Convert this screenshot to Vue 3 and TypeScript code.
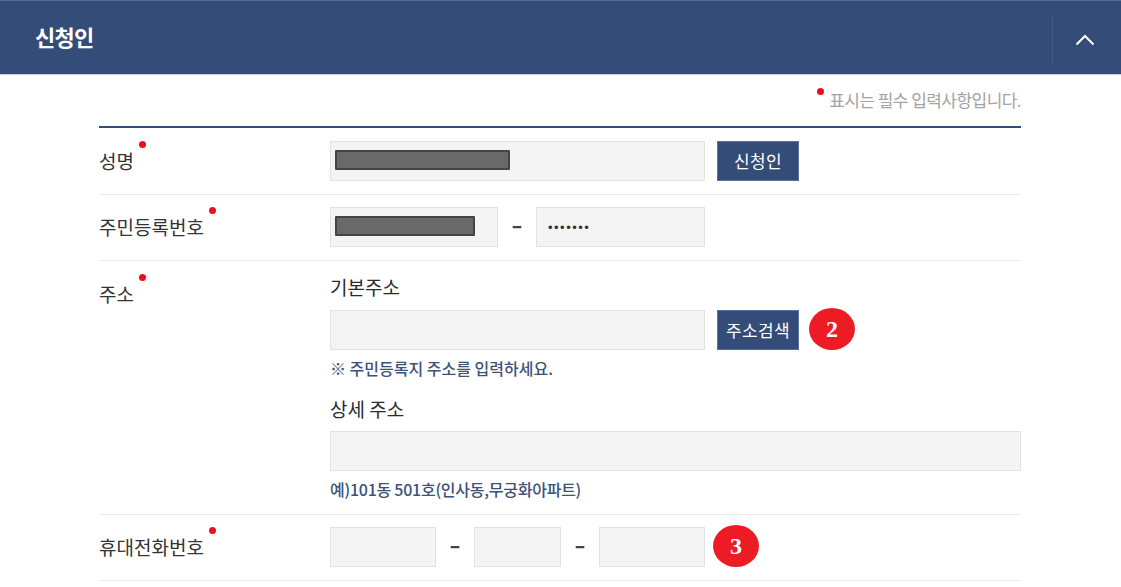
<script setup lang="ts">
interface Part { width: number; masked?: number; secret?: string }
const residentParts: Part[] = [{ width: 168, masked: 140 }, { width: 169, secret: '1234567' }]
const phoneParts: Part[] = [{ width: 106 }, { width: 87 }, { width: 106 }]
</script>

<template>
  <section class="panel">
    <header class="head">
      <h2 class="title">신청인</h2>
      <button class="toggle" type="button" aria-label="접기">
        <svg width="20" height="12" viewBox="0 0 20 12" fill="none">
          <path d="M1.5 10.5 10 2l8.5 8.5" stroke="#fff" stroke-width="2" />
        </svg>
      </button>
    </header>

    <div class="body">
      <p class="required"><i class="dot"></i>표시는 필수 입력사항입니다.</p>

      <div class="table">
        <div class="row">
          <div class="label"><span class="req">성명</span></div>
          <div class="line">
            <div class="field wide"><input class="input" readonly /><span class="mask name"></span></div>
            <button class="btn" type="button">신청인</button>
          </div>
        </div>

        <div class="row">
          <div class="label"><span class="req">주민등록번호</span></div>
          <div class="line joined">
            <template v-for="(p, i) in residentParts" :key="i">
              <span v-if="i" class="dash">–</span>
              <div class="field" :style="{ width: p.width + 'px' }">
                <input class="input" :class="{ secret: p.secret }" :type="p.secret ? 'password' : 'text'" :value="p.secret" readonly />
                <span v-if="p.masked" class="mask" :style="{ width: p.masked + 'px' }"></span>
              </div>
            </template>
          </div>
        </div>

        <div class="row addr">
          <div class="label"><span class="req">주소</span></div>
          <div class="stack">
            <div class="sub first">기본주소</div>
            <div class="line">
              <div class="field wide"><input class="input" readonly /></div>
              <button class="btn" type="button">주소검색</button>
              <span class="badge">2</span>
            </div>
            <p class="hint top-hint">※ 주민등록지 주소를 입력하세요.</p>
            <div class="sub second">상세 주소</div>
            <div class="field full"><input class="input" readonly /></div>
            <p class="hint bottom-hint">예)101동 501호(인사동,무궁화아파트)</p>
          </div>
        </div>

        <div class="row">
          <div class="label"><span class="req">휴대전화번호</span></div>
          <div class="line joined">
            <template v-for="(p, i) in phoneParts" :key="i">
              <span v-if="i" class="dash">–</span>
              <div class="field" :style="{ width: p.width + 'px' }"><input class="input" readonly /></div>
            </template>
            <span class="badge badge-3">3</span>
          </div>
        </div>
      </div>
    </div>
  </section>
</template>

<style scoped>
.panel {
  width: 1121px;
  height: 587px;
  overflow: hidden;
  background: #fff;
  font-family: "Noto Sans CJK KR", "Noto Sans", sans-serif;
  color: #333;
}
.head {
  box-sizing: border-box;
  height: 75px;
  display: flex;
  align-items: center;
  justify-content: space-between;
  background: #344c78;
  border-top: 1px solid #5a6e92;
  border-bottom: 1px solid #c9d0dc;
  padding-left: 35px;
}
.title {
  margin: 0 0 3px;
  color: #fff;
  font-size: 22px;
  font-weight: 700;
  letter-spacing: -0.8px;
  line-height: 28px;
}
.toggle {
  width: 69px;
  height: 50px;
  margin-top: 2px;
  padding: 3px 5px 0 0;
  display: flex;
  align-items: center;
  justify-content: center;
  background: none;
  border: 0;
  border-left: 1px solid #41588a;
}
.body {
  padding: 0 100px 0 99px;
}
.required {
  position: relative;
  box-sizing: border-box;
  height: 51px;
  margin: 0;
  padding-top: 14px;
  text-align: right;
  color: #a3a3a3;
  font-size: 17px;
  line-height: 22px;
  letter-spacing: -0.55px;
}
.required .dot {
  position: absolute;
  left: 718px;
  top: 13px;
  width: 7px;
  height: 7px;
  border-radius: 50%;
  background: #e8101e;
}
.table {
  border-top: 2px solid #344c78;
  padding-top: 1px;
}
.row {
  display: grid;
  grid-template-columns: 231px 691px;
  padding: 12px 0 13px;
  border-bottom: 1px solid #ececec;
}
.label {
  font-size: 19px;
  line-height: 40px;
  color: #333;
}
.addr .label {
  padding-top: 1px;
}
.req {
  position: relative;
  display: inline-block;
}
.req::after {
  content: "";
  position: absolute;
  right: -12px;
  top: 0;
  width: 7px;
  height: 7px;
  border-radius: 50%;
  background: #e8101e;
}
.line {
  display: flex;
  align-items: center;
  gap: 12px;
}
.joined {
  gap: 0;
}
.field {
  position: relative;
  height: 40px;
  flex: none;
}
.wide {
  width: 375px;
}
.full {
  width: 691px;
}
.input {
  box-sizing: border-box;
  display: block;
  width: 100%;
  height: 100%;
  padding: 0 11px;
  background: #f4f4f4;
  border: 1px solid #e2e2e2;
  outline: none;
  color: #333;
  font-size: 13px;
}
.secret {
  letter-spacing: 1.5px;
}
.mask {
  position: absolute;
  left: 5px;
  top: 9px;
  box-sizing: border-box;
  height: 20px;
  background: #696969;
  border: 2px solid #444;
  border-radius: 1px;
}
.mask.name {
  width: 175px;
}
.btn {
  flex: none;
  width: 82px;
  height: 40px;
  padding: 0 0 2px;
  background: #344c78;
  border: 1px solid #5c7199;
  color: #fff;
  font-family: inherit;
  font-size: 17px;
  letter-spacing: 0.4px;
}
.dash {
  width: 38px;
  flex: none;
  padding-bottom: 4px;
  text-align: center;
  font-size: 19px;
  font-weight: 900;
  line-height: 24px;
  color: #444;
}
.badge {
  flex: none;
  width: 46px;
  height: 42px;
  margin: -3px 0 -1px -2px;
  border-radius: 50%;
  background: #ed1c24;
  color: #fff;
  font-family: "Liberation Serif", serif;
  font-size: 24px;
  font-weight: 700;
  line-height: 42px;
  text-align: center;
}
.badge-3 {
  margin-left: 8px;
}
.stack {
  min-width: 0;
}
.sub {
  font-size: 19px;
  line-height: 27px;
  color: #2b2b2b;
}
.first {
  margin-bottom: 10px;
}
.second {
  margin: 15px 0 9px;
}
.hint {
  margin: 6px 0 0;
  color: #3d5278;
  font-size: 16px;
  font-weight: 500;
  line-height: 24px;
}
.bottom-hint {
  letter-spacing: -0.25px;
}
</style>
